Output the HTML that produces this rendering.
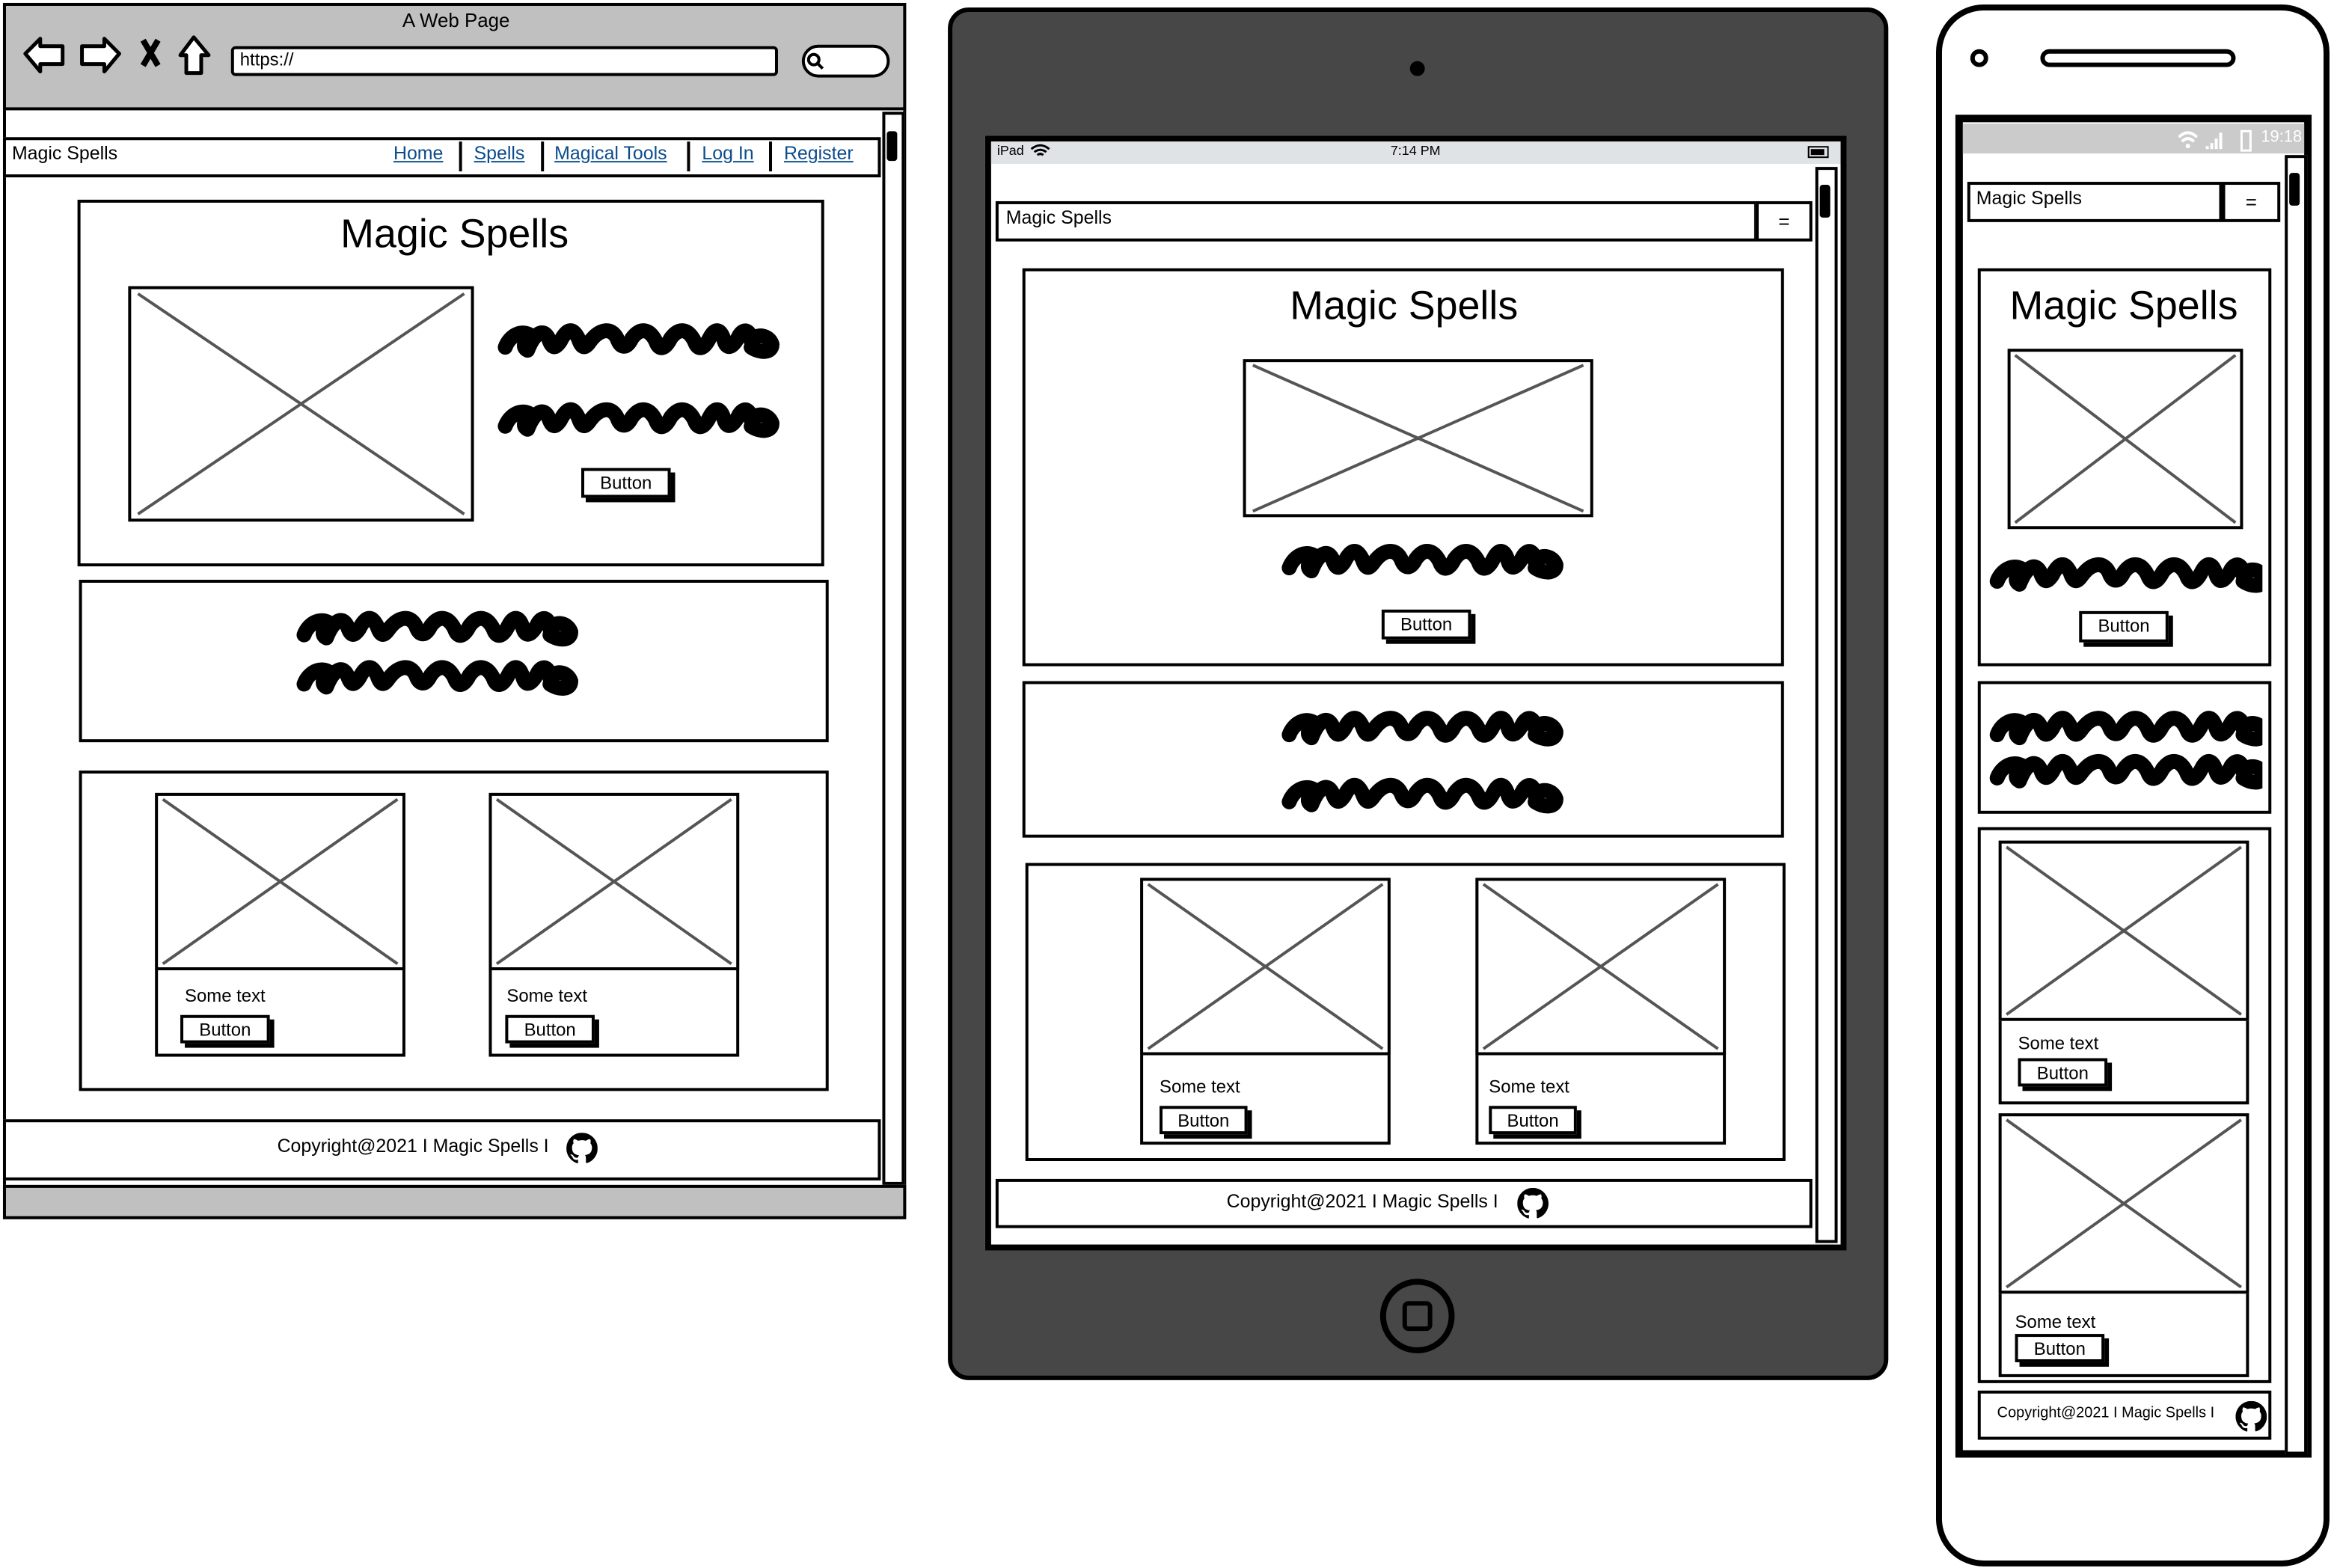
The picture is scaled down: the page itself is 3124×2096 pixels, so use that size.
<!DOCTYPE html>
<html><head><meta charset="utf-8">
<style>
html,body{margin:0;padding:0;background:#fff;overflow:hidden}
body{width:3124px;height:2096px;position:relative}
#w{position:absolute;left:0;top:0;width:1568px;height:1052px;transform:scale(1.9923);transform-origin:0 0;font-family:"Liberation Sans",sans-serif;color:#000}
.a{position:absolute;box-sizing:border-box}
.b{border:2px solid #000;background:#fff}
.img{position:absolute;box-sizing:border-box;border:2px solid #000;background:#fff}
.img svg{position:absolute;left:0;top:0;width:100%;height:100%}
.btn{position:absolute;box-sizing:border-box;border:2px solid #000;background:#fff;box-shadow:3px 3px 0 #000;font-size:12px;text-align:center;line-height:16px}
.t{position:absolute;white-space:nowrap}
.sc{position:absolute}
.ttl{position:absolute;font-size:27px;white-space:nowrap;transform:translateX(-50%)}
</style></head><body><div id="w">
<svg width="0" height="0" style="position:absolute"><defs>
<symbol id="x" viewBox="0 0 100 100" preserveAspectRatio="none"><path d="M2 2L98 98M98 2L2 98" stroke="#555" stroke-width="2" vector-effect="non-scaling-stroke" fill="none"/></symbol>
<symbol id="s" viewBox="0 0 194 28" preserveAspectRatio="none"><path d="M7 20C10 12 18 8 24 12C20 16 18 20 22 22C26 12 32 6 36 14C38 20 40 22 44 16C48 8 52 6 56 14C58 20 60 22 64 16C70 8 78 6 82 14C84 20 88 22 92 14C98 6 104 8 108 16C110 22 114 22 118 14C124 6 130 8 134 16C136 22 140 22 144 14C148 6 152 8 154 16C156 22 160 20 164 12C168 6 172 10 172 16C176 10 184 12 186 18C186 24 178 24 172 20" fill="none" stroke="#000" stroke-width="10" stroke-linecap="round" stroke-linejoin="round"/></symbol>
<symbol id="g" viewBox="0 0 16 16"><path fill="#000" d="M8 0C3.6 0 0 3.6 0 8c0 3.5 2.3 6.5 5.5 7.6.4.1.5-.2.5-.4v-1.4c-2.2.5-2.7-1-2.7-1-.4-.9-.9-1.2-.9-1.2-.7-.5.1-.5.1-.5.8.1 1.200.8 1.2.8.7 1.2 1.9.9 2.3.7.1-.5.3-.9.5-1.100-1.800-.2-3.600-.9-3.600-4 0-.9.3-1.600.8-2.100-.1-.2-.4-1 .1-2.100 0 0 .7-.2 2.200.8.6-.2 1.300-.3 2-.3s1.400.1 2 .3c1.500-1 2.200-.8 2.200-.8.4 1.100.2 1.900.1 2.100.5.6.8 1.300.8 2.100 0 3.100-1.900 3.700-3.600 3.900.3.3.5.8.5 1.500v2.200c0 .2.1.5.6.4C13.700 14.500 16 11.500 16 8c0-4.400-3.600-8-8-8z"/></symbol>
</defs></svg>

<!-- BROWSER -->
<div class="a" style="left:2px;top:2px;width:606px;height:816px;border:2px solid #000;background:#fff"></div>
<div class="a" style="left:2px;top:2px;width:606px;height:72px;border:2px solid #000;background:#c0c0c0"></div>
<div class="t" style="left:270px;top:6px;font-size:13px">A Web Page</div>
<svg class="sc" style="left:14px;top:22px" width="130" height="30" viewBox="0 0 130 30"><path d="M3 14L13 4V9H28V21H13V26Z" fill="#fff" stroke="#000" stroke-width="2.5" stroke-linejoin="round"/><path d="M66 14L56 4V9H41V21H56V26Z" fill="#fff" stroke="#000" stroke-width="2.5" stroke-linejoin="round"/><path d="M82 5L92 22M92 5L82 22" stroke="#000" stroke-width="4"/><path d="M116 3L107 15H111V27H121V15H126Z" fill="#fff" stroke="#000" stroke-width="2.5" stroke-linejoin="round"/></svg>
<div class="a" style="left:155px;top:31px;width:367px;height:20px;border:2px solid #000;border-radius:3px;background:#fff"></div>
<div class="t" style="left:161px;top:33px;font-size:12px">https://</div>
<div class="a" style="left:538px;top:30px;width:59px;height:22px;border:2px solid #000;border-radius:12px;background:#fff"></div>
<svg class="sc" style="left:541px;top:35px" width="12" height="12"><circle cx="5" cy="5" r="3.5" fill="none" stroke="#000" stroke-width="2"/><path d="M7 7L11 11" stroke="#000" stroke-width="2"/></svg>
<div class="a" style="left:592px;top:75px;width:15px;height:720px;border:2px solid #000;background:#fff"></div>
<div class="a" style="left:595px;top:88px;width:7px;height:20px;background:#000;border-radius:2px"></div>
<div class="a" style="left:2px;top:795px;width:606px;height:23px;border:2px solid #000;background:#c0c0c0"></div>
<div class="a b" style="left:2px;top:92px;width:589px;height:27px"></div>
<div class="t" style="left:8px;top:96px;font-size:12.5px">Magic Spells</div>
<div class="t" style="left:264px;top:96px;font-size:12.5px;color:#0b4c8c;text-decoration:underline">Home</div>
<div class="a" style="left:308px;top:95px;width:2px;height:20px;background:#000"></div>
<div class="t" style="left:318px;top:96px;font-size:12.5px;color:#0b4c8c;text-decoration:underline">Spells</div>
<div class="a" style="left:363px;top:95px;width:2px;height:20px;background:#000"></div>
<div class="t" style="left:372px;top:96px;font-size:12.5px;color:#0b4c8c;text-decoration:underline">Magical Tools</div>
<div class="a" style="left:461px;top:95px;width:2px;height:20px;background:#000"></div>
<div class="t" style="left:471px;top:96px;font-size:12.5px;color:#0b4c8c;text-decoration:underline">Log In</div>
<div class="a" style="left:516px;top:95px;width:2px;height:20px;background:#000"></div>
<div class="t" style="left:526px;top:96px;font-size:12.5px;color:#0b4c8c;text-decoration:underline">Register</div>

<div class="a b" style="left:52px;top:134px;width:501px;height:246px"></div>
<div class="ttl" style="left:305px;top:142px">Magic Spells</div>
<div class="img" style="left:86px;top:192px;width:232px;height:158px"><svg><use href="#x"/></svg></div>
<svg class="sc" style="left:332px;top:213px" width="194" height="28"><use href="#s"/></svg>
<svg class="sc" style="left:332px;top:266px" width="194" height="28"><use href="#s"/></svg>
<div class="btn" style="left:390px;top:314px;width:60px;height:20px">Button</div>

<div class="a b" style="left:53px;top:389px;width:503px;height:109px"></div>
<svg class="sc" style="left:197px;top:406px" width="194" height="28"><use href="#s"/></svg>
<svg class="sc" style="left:197px;top:439px" width="194" height="28"><use href="#s"/></svg>

<div class="a b" style="left:53px;top:517px;width:503px;height:215px"></div>
<div class="a b" style="left:104px;top:532px;width:168px;height:177px"></div>
<div class="img" style="left:104px;top:532px;width:168px;height:119px"><svg><use href="#x"/></svg></div>
<div class="t" style="left:124px;top:661px;font-size:12px">Some text</div>
<div class="btn" style="left:121px;top:681px;width:60px;height:19px">Button</div>
<div class="a b" style="left:328px;top:532px;width:168px;height:177px"></div>
<div class="img" style="left:328px;top:532px;width:168px;height:119px"><svg><use href="#x"/></svg></div>
<div class="t" style="left:340px;top:661px;font-size:12px">Some text</div>
<div class="btn" style="left:339px;top:681px;width:60px;height:19px">Button</div>

<div class="a b" style="left:2px;top:751px;width:589px;height:41px"></div>
<div class="t" style="left:186px;top:762px;font-size:12.5px">Copyright@2021 I Magic Spells I</div>
<svg class="sc" style="left:380px;top:760px" width="21" height="21"><use href="#g"/></svg>

<!-- IPAD -->
<div class="a" style="left:636px;top:5px;width:631px;height:921px;background:#474747;border:3px solid #000;border-radius:14px"></div>
<div class="a" style="left:946px;top:41px;width:10px;height:10px;border-radius:50%;background:#000"></div>
<div class="a" style="left:661px;top:91px;width:578px;height:748px;background:#fff;border:4px solid #000"></div>
<div class="a" style="left:665px;top:95px;width:570px;height:15px;background:#dfe3e6"></div>
<div class="t" style="left:669px;top:96px;font-size:9px">iPad</div>
<svg class="sc" style="left:691px;top:96px" width="14" height="10"><path d="M1 4Q7-1 13 4M3 6Q7 3 11 6M5 8Q7 6.5 9 8" stroke="#000" stroke-width="1.5" fill="none"/></svg>
<div class="t" style="left:933px;top:96px;font-size:9px">7:14 PM</div>
<div class="a" style="left:1213px;top:98px;width:14px;height:8px;border:1.5px solid #000"></div>
<div class="a" style="left:1215px;top:100px;width:9px;height:4px;background:#000"></div>
<div class="a" style="left:1218px;top:112px;width:15px;height:722px;border:2px solid #000;background:#fff"></div>
<div class="a" style="left:1221px;top:124px;width:7px;height:22px;background:#000;border-radius:2px"></div>
<div class="a b" style="left:668px;top:135px;width:511px;height:27px"></div>
<div class="t" style="left:675px;top:139px;font-size:12.5px">Magic Spells</div>
<div class="a b" style="left:1178px;top:135px;width:38px;height:27px;text-align:center;font-size:13px;line-height:23px">=</div>

<div class="a b" style="left:686px;top:180px;width:511px;height:267px"></div>
<div class="ttl" style="left:942px;top:190px">Magic Spells</div>
<div class="img" style="left:834px;top:241px;width:235px;height:106px"><svg><use href="#x"/></svg></div>
<svg class="sc" style="left:858px;top:361px" width="194" height="28"><use href="#s"/></svg>
<div class="btn" style="left:927px;top:409px;width:60px;height:20px">Button</div>

<div class="a b" style="left:686px;top:457px;width:511px;height:105px"></div>
<svg class="sc" style="left:858px;top:473px" width="194" height="28"><use href="#s"/></svg>
<svg class="sc" style="left:858px;top:518px" width="194" height="28"><use href="#s"/></svg>

<div class="a b" style="left:688px;top:579px;width:510px;height:200px"></div>
<div class="a b" style="left:765px;top:589px;width:168px;height:179px"></div>
<div class="img" style="left:765px;top:589px;width:168px;height:119px"><svg><use href="#x"/></svg></div>
<div class="t" style="left:778px;top:722px;font-size:12px">Some text</div>
<div class="btn" style="left:778px;top:742px;width:59px;height:19px">Button</div>
<div class="a b" style="left:990px;top:589px;width:168px;height:179px"></div>
<div class="img" style="left:990px;top:589px;width:168px;height:119px"><svg><use href="#x"/></svg></div>
<div class="t" style="left:999px;top:722px;font-size:12px">Some text</div>
<div class="btn" style="left:999px;top:742px;width:59px;height:19px">Button</div>

<div class="a b" style="left:668px;top:791px;width:548px;height:33px"></div>
<div class="t" style="left:823px;top:799px;font-size:12.5px">Copyright@2021 I Magic Spells I</div>
<svg class="sc" style="left:1018px;top:797px" width="21" height="21"><use href="#g"/></svg>
<div class="a" style="left:926px;top:858px;width:50px;height:50px;border:4px solid #000;border-radius:50%"></div>
<div class="a" style="left:941px;top:873px;width:20px;height:20px;border:3.5px solid #000;border-radius:4px"></div>

<!-- PHONE -->
<div class="a" style="left:1299px;top:3px;width:264px;height:1048px;border:4px solid #000;border-radius:32px;background:#fff"></div>
<div class="a" style="left:1322px;top:33px;width:12px;height:12px;border:3px solid #000;border-radius:50%"></div>
<div class="a" style="left:1369px;top:33px;width:131px;height:12px;border:3px solid #000;border-radius:8px"></div>
<div class="a" style="left:1312px;top:77px;width:239px;height:901px;border:5px solid #000;background:#fff"></div>
<div class="a" style="left:1317px;top:83px;width:229px;height:20px;background:#cbcbcb"></div>
<svg class="sc" style="left:1460px;top:86px" width="70" height="16"><path d="M2 6Q8 0 14 6M4 9Q8 5 12 9" stroke="#fff" stroke-width="2" fill="none"/><circle cx="8" cy="12" r="1.5" fill="#fff"/><rect x="20" y="12" width="2" height="2" fill="#fff"/><rect x="23" y="10" width="2" height="4" fill="#fff"/><rect x="26" y="7" width="2" height="7" fill="#fff"/><rect x="29" y="3" width="2" height="11" fill="#fff"/><rect x="44" y="2" width="6" height="13" fill="none" stroke="#fff" stroke-width="1.5"/></svg>
<div class="t" style="left:1517px;top:86px;font-size:11px;color:#fff">19:18</div>
<div class="a" style="left:1533px;top:104px;width:15px;height:872px;border:2px solid #000;background:#fff"></div>
<div class="a" style="left:1536px;top:116px;width:7px;height:22px;background:#000;border-radius:2px"></div>
<div class="a b" style="left:1320px;top:122px;width:171px;height:27px"></div>
<div class="t" style="left:1326px;top:126px;font-size:12.5px">Magic Spells</div>
<div class="a b" style="left:1491px;top:122px;width:39px;height:27px;text-align:center;font-size:13px;line-height:23px">=</div>

<div class="a b" style="left:1327px;top:180px;width:197px;height:267px"></div>
<div class="ttl" style="left:1425px;top:190px">Magic Spells</div>
<div class="img" style="left:1347px;top:234px;width:158px;height:121px"><svg><use href="#x"/></svg></div>
<div class="a" style="left:1329px;top:365px;width:189px;height:36px;overflow:hidden"><svg class="sc" style="left:4px;top:5px" width="194" height="28"><use href="#s"/></svg></div>
<div class="btn" style="left:1395px;top:410px;width:60px;height:21px">Button</div>

<div class="a b" style="left:1327px;top:457px;width:197px;height:89px"></div>
<div class="a" style="left:1329px;top:465px;width:189px;height:70px;overflow:hidden"><svg class="sc" style="left:4px;top:8px" width="194" height="28"><use href="#s"/></svg><svg class="sc" style="left:4px;top:37px" width="194" height="28"><use href="#s"/></svg></div>

<div class="a b" style="left:1327px;top:555px;width:197px;height:373px"></div>
<div class="a b" style="left:1341px;top:564px;width:168px;height:177px"></div>
<div class="img" style="left:1341px;top:564px;width:168px;height:121px"><svg><use href="#x"/></svg></div>
<div class="t" style="left:1354px;top:693px;font-size:12px">Some text</div>
<div class="btn" style="left:1354px;top:710px;width:60px;height:19px">Button</div>
<div class="a b" style="left:1341px;top:747px;width:168px;height:177px"></div>
<div class="img" style="left:1341px;top:747px;width:168px;height:121px"><svg><use href="#x"/></svg></div>
<div class="t" style="left:1352px;top:880px;font-size:12px">Some text</div>
<div class="btn" style="left:1352px;top:895px;width:60px;height:19px">Button</div>

<div class="a b" style="left:1327px;top:933px;width:197px;height:33px"></div>
<div class="t" style="left:1340px;top:943px;font-size:10px">Copyright@2021 I Magic Spells I</div>
<svg class="sc" style="left:1500px;top:940px" width="21" height="21"><use href="#g"/></svg>
</div></body></html>
